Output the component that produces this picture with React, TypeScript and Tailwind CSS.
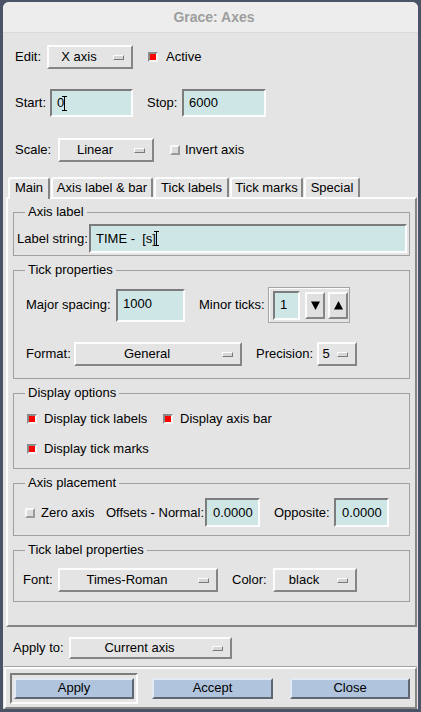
import React from "react";

const RAISED =
  "border-2 border-t-[#fcfcfc] border-l-[#fcfcfc] border-b-[#858585] border-r-[#858585]";
const SUNKEN =
  "border-2 border-t-[#7c7c7c] border-l-[#7c7c7c] border-b-[#fcfcfc] border-r-[#fcfcfc]";

function Indicator() {
  return (
    <span className="shrink-0 w-[11px] h-[5px] ml-[4px] mr-[7px] border border-t-[#fcfcfc] border-l-[#fcfcfc] border-b-[#7a7a7a] border-r-[#7a7a7a] bg-[#d6d6d6]" />
  );
}

function Option({ label, className }: { label: string; className: string }) {
  return (
    <div className={`flex items-center shrink-0 ${RAISED} ${className}`}>
      <span className="flex-1 text-center whitespace-nowrap">{label}</span>
      <Indicator />
    </div>
  );
}

function Field({
  children,
  className,
}: {
  children?: React.ReactNode;
  className: string;
}) {
  return (
    <div className={`flex items-center shrink-0 pl-[5px] bg-[#cfe6e6] ${SUNKEN} ${className}`}>
      {children}
    </div>
  );
}

function Check({ checked }: { checked: boolean }) {
  return (
    <span
      className={
        checked
          ? "shrink-0 w-[10px] h-[10px] border-2 border-t-[#8a8a8a] border-l-[#8a8a8a] border-b-[#f6f6f6] border-r-[#f6f6f6] bg-[#ff0000]"
          : "shrink-0 w-[10px] h-[10px] border-2 border-t-[#f8f8f8] border-l-[#f8f8f8] border-b-[#9a9a9a] border-r-[#9a9a9a] bg-[#dcdcdc]"
      }
    />
  );
}

function IBeam() {
  return (
    <svg width="5" height="15" viewBox="0 0 5 15" className="shrink-0 -ml-[2px]">
      <path d="M0 0.5H5M2.5 0.5V14.5M0 14.5H5" stroke="#000" strokeWidth="1" fill="none" />
    </svg>
  );
}

function Frame({
  title,
  className,
  children,
}: {
  title: string;
  className: string;
  children: React.ReactNode;
}) {
  return (
    <fieldset className={`min-w-0 border border-[#a0a0a0] ${className}`}>
      <legend className="ml-[11px] px-[3px] text-[13px] leading-[16px]">{title}</legend>
      {children}
    </fieldset>
  );
}

function Tab({
  label,
  className,
  selected,
}: {
  label: string;
  className: string;
  selected?: boolean;
}) {
  return (
    <div
      className={
        selected
          ? `relative z-10 -mb-[2px] h-[22px] pb-[2px] flex items-center justify-center bg-[#e4e4e4] border-2 border-b-0 border-t-[#fcfcfc] border-l-[#fcfcfc] border-r-[#858585] rounded-t-[3px] ${className}`
          : `h-[20px] flex items-center justify-center bg-[#e4e4e4] border-2 border-b-0 border-t-[#fcfcfc] border-l-[#fcfcfc] border-r-[#858585] rounded-t-[3px] ${className}`
      }
    >
      <span className="whitespace-nowrap">{label}</span>
    </div>
  );
}

function PushButton({ label, className }: { label: string; className: string }) {
  return (
    <div
      className={`flex items-center justify-center shrink-0 bg-[#b0c4de] border-2 border-t-[#e2eaf4] border-l-[#e2eaf4] border-b-[#5e6672] border-r-[#5e6672] ${className}`}
    >
      {label}
    </div>
  );
}

export default function App() {
  return (
    <div className="w-[421px] h-[712px] bg-[#4b5366] pt-[2px] px-[3px] pb-[3px] font-['Liberation_Sans',Arial,sans-serif] text-[13px] leading-[16px] text-black">
      <div className="h-full flex flex-col rounded-t-[6px] overflow-hidden bg-[#e4e4e4]">
        {/* title bar */}
        <div className="h-[31px] shrink-0 flex items-center justify-center pl-[7px] bg-[#ededed] border-b border-[#dadada]">
          <span className="font-bold text-[14px] text-[#9d9d9d]">Grace: Axes</span>
        </div>

        {/* Edit row */}
        <div className="flex items-center h-[24px] mt-[12px] pl-[12px]">
          <span className="w-[32px]">Edit:</span>
          <Option label="X axis" className="w-[86px] h-[24px]" />
          <span className="ml-[15px] flex">
            <Check checked />
          </span>
          <span className="ml-[8px]">Active</span>
        </div>

        {/* Start/Stop row */}
        <div className="flex items-center h-[28px] mt-[20px] pl-[12px]">
          <span className="w-[35px]">Start:</span>
          <Field className="w-[83px] h-[28px]">
            <span>0</span>
            <IBeam />
          </Field>
          <span className="ml-[14px] w-[35px]">Stop:</span>
          <Field className="w-[84px] h-[28px]">
            <span>6000</span>
          </Field>
        </div>

        {/* Scale row */}
        <div className="flex items-center h-[24px] mt-[21px] pl-[12px]">
          <span className="w-[43px]">Scale:</span>
          <Option label="Linear" className="w-[96px] h-[24px]" />
          <span className="ml-[16px] flex">
            <Check checked={false} />
          </span>
          <span className="ml-[5px]">Invert axis</span>
        </div>

        {/* Tabs */}
        <div className="flex items-end h-[20px] mt-[15px] ml-[5px] gap-[1px]">
          <Tab label="Main" className="w-[42px]" selected />
          <Tab label="Axis label & bar" className="w-[102px]" />
          <Tab label="Tick labels" className="w-[75px]" />
          <Tab label="Tick marks" className="w-[73px]" />
          <Tab label="Special" className="w-[56px]" />
        </div>

        {/* Tab panel */}
        <div className={`ml-[3px] w-[411px] h-[430px] shrink-0 flex flex-col pl-[5px] pr-[5px] ${RAISED}`}>
          <Frame title="Axis label" className="mt-[5px] pb-[2px]">
            <div className="flex items-center pl-[3px] pt-[4px]">
              <span className="w-[72px] whitespace-nowrap">Label string:</span>
              <Field className="flex-1 h-[29px] mr-[2px]">
                <span className="whitespace-pre">TIME -  [s]</span>
                <IBeam />
              </Field>
            </div>
          </Frame>

          <Frame title="Tick properties" className="mt-[6px] pb-[12px]">
            <div className="flex items-center h-[36px] pl-[12px] mt-[9px]">
              <span className="w-[90px] whitespace-nowrap">Major spacing:</span>
              <Field className="w-[69px] h-[33px]">
                <span className="-mt-[3px]">1000</span>
              </Field>
              <span className="ml-[14px] w-[69px] whitespace-nowrap">Minor ticks:</span>
              <div className="w-[82px] h-[36px] flex items-center pl-[4px] border border-[#a4a4a4] shadow-[inset_1px_1px_0_#fcfcfc]">
                <Field className="w-[27px] h-[29px]">
                  <span>1</span>
                </Field>
                <div className={`ml-[5px] w-[20px] h-[27px] flex items-center justify-center bg-[#e0e0e0] ${RAISED}`}>
                  <svg width="9" height="9" viewBox="0 0 9 9">
                    <polygon points="0,0.5 9,0.5 4.5,9" fill="#000" />
                  </svg>
                </div>
                <div className={`ml-[3px] w-[20px] h-[27px] flex items-center justify-center bg-[#e0e0e0] ${RAISED}`}>
                  <svg width="9" height="9" viewBox="0 0 9 9">
                    <polygon points="4.5,0 9,8.5 0,8.5" fill="#000" />
                  </svg>
                </div>
              </div>
            </div>
            <div className="flex items-center h-[24px] pl-[12px] mt-[19px]">
              <span className="w-[48px]">Format:</span>
              <Option label="General" className="w-[168px] h-[24px]" />
              <span className="ml-[14px] w-[61px]">Precision:</span>
              <Option label="5" className="w-[40px] h-[24px]" />
            </div>
          </Frame>

          <Frame title="Display options" className="mt-[6px] pb-[9px]">
            <div className="flex items-center h-[20px] pl-[13px] mt-[8px]">
              <div className="w-[136px] flex items-center">
                <Check checked />
                <span className="ml-[7px] whitespace-nowrap">Display tick labels</span>
              </div>
              <Check checked />
              <span className="ml-[7px] whitespace-nowrap">Display axis bar</span>
            </div>
            <div className="flex items-center h-[20px] pl-[13px] mt-[10px]">
              <Check checked />
              <span className="ml-[7px] whitespace-nowrap">Display tick marks</span>
            </div>
          </Frame>

          <Frame title="Axis placement" className="mt-[6px] pb-[8px]">
            <div className="flex items-center h-[29px] pl-[11px] mt-[7px]">
              <div className="w-[81px] flex items-center">
                <Check checked={false} />
                <span className="ml-[6px] whitespace-nowrap">Zero axis</span>
              </div>
              <span className="w-[99px] whitespace-nowrap">Offsets - Normal:</span>
              <Field className="w-[55px] h-[29px]">
                <span className="ml-[1px]">0.0000</span>
              </Field>
              <span className="ml-[14px] w-[60px]">Opposite:</span>
              <Field className="w-[55px] h-[29px]">
                <span className="ml-[1px]">0.0000</span>
              </Field>
            </div>
          </Frame>

          <Frame title="Tick label properties" className="mt-[6px] pb-[9px]">
            <div className="flex items-center h-[24px] pl-[9px] mt-[10px]">
              <span className="w-[35px]">Font:</span>
              <Option label="Times-Roman" className="w-[160px] h-[24px]" />
              <span className="ml-[14px] w-[41px]">Color:</span>
              <Option label="black" className="w-[84px] h-[24px]" />
            </div>
          </Frame>
        </div>

        {/* Apply to */}
        <div className="flex items-center h-[22px] mt-[10px] pl-[10px]">
          <span className="w-[56px] whitespace-nowrap">Apply to:</span>
          <Option label="Current axis" className="w-[163px] h-[22px]" />
        </div>

        {/* Action area */}
        <div className={`mt-[8px] ml-[1px] mr-[1px] h-[42px] shrink-0 flex items-center pl-[4px] shadow-[0_-1px_0_#a4a4a4] ${RAISED}`}>
          <div className={`w-[128px] h-[31px] flex items-center justify-center ${SUNKEN}`}>
            <PushButton label="Apply" className="w-[120px] h-[21px]" />
          </div>
          <PushButton label="Accept" className="ml-[14px] w-[121px] h-[21px]" />
          <PushButton label="Close" className="ml-[17px] w-[120px] h-[21px]" />
        </div>
      </div>
    </div>
  );
}
